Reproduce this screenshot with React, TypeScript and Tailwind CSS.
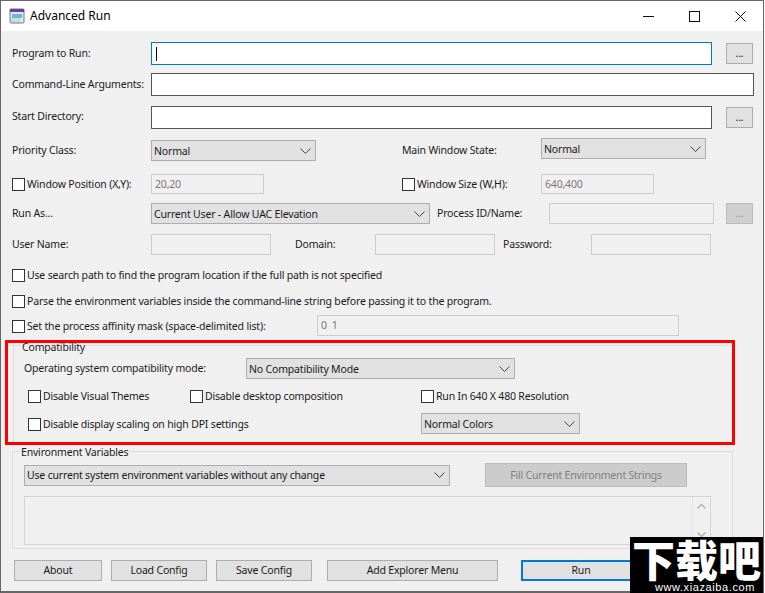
import React from "react";

function Chevron() {
  return (
    <svg width="11" height="6" viewBox="0 0 11 6" fill="none" stroke="#444" strokeWidth="1" className="shrink-0">
      <path d="M0.5 0.5 L5.5 5.5 L10.5 0.5" />
    </svg>
  );
}

function Select({ text, className }: { text: string; className: string }) {
  return (
    <div className={"flex h-[21px] shrink-0 items-center justify-between border border-[#adadad] bg-[#e1e1e1] pl-[2px] pr-[4px] " + className}>
      <span className="mt-px">{text}</span>
      <Chevron />
    </div>
  );
}

function Check({ text, className = "" }: { text: string; className?: string }) {
  return (
    <div className={"flex shrink-0 items-center gap-[2px] whitespace-nowrap " + className}>
      <span className="h-[13px] w-[13px] shrink-0 border border-[#333] bg-white" />
      <span>{text}</span>
    </div>
  );
}

function Box({ className }: { className: string }) {
  return <div className={"h-[23px] shrink-0 border border-[#555] bg-white " + className} />;
}

function Disabled({ text = "", className }: { text?: string; className: string }) {
  return (
    <div className={"flex shrink-0 items-center border border-[#ccc] bg-[#f0f0f0] pl-[3px] text-[#777] " + className}>
      {text}
    </div>
  );
}

function Btn({ text, className }: { text: string; className: string }) {
  return (
    <div className={"flex h-[21px] shrink-0 items-center justify-center border border-[#adadad] bg-[#e1e1e1] " + className}>
      {text}
    </div>
  );
}

export default function App() {
  return (
    <div className="h-[593px] w-[765px] overflow-hidden bg-[#f8f8f8]">
      <div className="relative h-[593px] w-[764px] border border-b-2 border-[#666] bg-[#f0f0f0] font-['Noto_Sans',sans-serif] text-[10.5px] leading-none tracking-[-0.18px] text-[#1a1a1a]">
        {/* Title bar */}
        <div className="flex h-[30px] items-center bg-white">
          <svg width="16" height="16" viewBox="0 0 16 16" className="ml-[8px] shrink-0">
            <rect x="1" y="1" width="14" height="14" rx="1" fill="#dfe8ee" stroke="#6a7a88" />
            <rect x="1" y="1" width="14" height="3" fill="#6a3fa0" />
            <rect x="3" y="6" width="10" height="4" fill="#6fb6d8" />
            <rect x="3" y="11" width="7" height="2" fill="#f4f4f4" stroke="#7aa" strokeWidth="0.5" />
          </svg>
          <span className="ml-[5px] text-[12px] tracking-normal text-black">Advanced Run</span>
          <div className="ml-auto flex items-center">
            <svg width="11" height="11" viewBox="0 0 11 11" className="mr-[35px]" stroke="#111" fill="none"><path d="M0 5.5H11" /></svg>
            <svg width="11" height="11" viewBox="0 0 11 11" className="mr-[35px]" stroke="#111" fill="none"><rect x="0.5" y="0.5" width="10" height="10" /></svg>
            <svg width="11" height="11" viewBox="0 0 11 11" className="mr-[17px]" stroke="#111" fill="none"><path d="M0.5 0.5L10.5 10.5M10.5 0.5L0.5 10.5" /></svg>
          </div>
        </div>

        <div className="pl-[11px]">
          <div className="mt-[11px] flex items-start">
            <span className="mt-[6px] w-[139px] shrink-0 whitespace-nowrap">Program to Run:</span>
            <div className="flex h-[23px] w-[561px] shrink-0 items-center border border-[#0078d7] bg-white pl-[4px]">
              <span className="h-[14px] w-px bg-black" />
            </div>
            <Btn text="..." className="ml-[14px] mt-px w-[27px]" />
          </div>
          <div className="mt-[8px] flex items-start">
            <span className="mt-[6px] w-[139px] shrink-0 whitespace-nowrap">Command-Line Arguments:</span>
            <Box className="w-[603px]" />
          </div>
          <div className="mt-[10px] flex items-start">
            <span className="mt-[5px] w-[139px] shrink-0 whitespace-nowrap">Start Directory:</span>
            <Box className="w-[561px]" />
            <Btn text="..." className="ml-[14px] mt-px w-[27px]" />
          </div>
          <div className="mt-[9px] flex h-[23px] items-start">
            <span className="mt-[7px] w-[139px] shrink-0 whitespace-nowrap">Priority Class:</span>
            <Select text="Normal" className="mt-[2px] w-[165px]" />
            <span className="ml-[86px] mt-[7px] w-[139px] shrink-0 whitespace-nowrap">Main Window State:</span>
            <Select text="Normal" className="w-[165px]" />
          </div>
          <div className="mt-[13px] flex h-[20px] items-center">
            <Check text="Window Position (X,Y):" className="w-[139px]" />
            <Disabled text="20,20" className="h-[20px] w-[113px]" />
            <Check text="Window Size (W,H):" className="ml-[138px] w-[139px]" />
            <Disabled text="640,400" className="h-[20px] w-[113px]" />
          </div>
          <div className="mt-[9px] flex h-[21px] items-center">
            <span className="w-[139px] shrink-0 whitespace-nowrap">Run As...</span>
            <Select text="Current User - Allow UAC Elevation" className="w-[279px]" />
            <span className="ml-[7px] w-[112px] shrink-0 whitespace-nowrap">Process ID/Name:</span>
            <Disabled className="h-[21px] w-[165px]" />
            <div className="ml-[12px] flex h-[21px] w-[27px] shrink-0 items-center justify-center border border-[#bbb] bg-[#cfcfcf] text-[#888]">...</div>
          </div>
          <div className="mt-[10px] flex h-[21px] items-center">
            <span className="w-[139px] shrink-0 whitespace-nowrap">User Name:</span>
            <Disabled className="h-[21px] w-[120px]" />
            <span className="ml-[24px] w-[80px] shrink-0 whitespace-nowrap">Domain:</span>
            <Disabled className="h-[21px] w-[120px]" />
            <span className="ml-[8px] w-[88px] shrink-0 whitespace-nowrap">Password:</span>
            <Disabled className="h-[21px] w-[120px]" />
          </div>
          <Check text="Use search path to find the program location if the full path is not specified" className="mt-[13px] h-[14px]" />
          <Check text="Parse the environment variables inside the command-line string before passing it to the program." className="mt-[12px] h-[14px]" />
          <div className="mt-[7px] flex h-[21px] items-center">
            <Check text="Set the process affinity mask (space-delimited list):" className="mt-[2px] w-[305px]" />
            <Disabled text="0 1" className="h-[21px] w-[362px] tracking-[1px]" />
          </div>
        </div>

        {/* Compatibility group */}
        <div className="relative ml-[12px] mt-[9px] h-[99px] w-[720px] border border-[#dcdcdc] pl-[10px]">
          <span className="absolute left-[7px] top-[-4px] bg-[#f0f0f0] px-px">Compatibility</span>
          <div className="mt-[12px] flex h-[21px] items-center">
            <span className="w-[222px] shrink-0 whitespace-nowrap">Operating system compatibility mode:</span>
            <Select text="No Compatibility Mode" className="w-[269px]" />
          </div>
          <div className="mt-[10px] flex h-[14px] items-center pl-[4px]">
            <Check text="Disable Visual Themes" className="w-[162px]" />
            <Check text="Disable desktop composition" className="w-[231px]" />
            <Check text="Run In 640 X 480 Resolution" />
          </div>
          <div className="mt-[10px] flex h-[21px] items-center pl-[4px]">
            <Check text="Disable display scaling on high DPI settings" className="mt-[2px] w-[393px]" />
            <Select text="Normal Colors" className="w-[159px]" />
          </div>
        </div>

        {/* Environment group */}
        <div className="relative ml-[11px] mt-[7px] h-[98px] w-[721px] border border-[#dcdcdc] pl-[11px]">
          <span className="absolute left-[7px] top-[-5px] bg-[#f0f0f0] px-px">Environment Variables</span>
          <div className="mt-[11px] flex h-[24px] items-center">
            <Select text="Use current system environment variables without any change" className="w-[426px]" />
            <div className="ml-[35px] flex h-[24px] w-[202px] shrink-0 items-center justify-center border border-[#bbb] bg-[#cccccc] text-[#808080]">Fill Current Environment Strings</div>
          </div>
          <div className="mt-[9px] flex h-[49px] w-[687px] justify-end border border-[#d4d4d4] bg-[#f0f0f0]">
            <div className="flex w-[18px] flex-col items-center justify-between border-l border-[#e4e4e4] py-[7px]">
              <svg width="9" height="5" viewBox="0 0 9 5" fill="none" stroke="#b5b5b5" strokeWidth="1.5"><path d="M0.5 4.5L4.5 0.5L8.5 4.5" /></svg>
              <svg width="9" height="5" viewBox="0 0 9 5" fill="none" stroke="#b5b5b5" strokeWidth="1.5"><path d="M0.5 0.5L4.5 4.5L8.5 0.5" /></svg>
            </div>
          </div>
        </div>

        {/* Bottom buttons */}
        <div className="ml-[13px] mt-[11px] flex items-center">
          <Btn text="About" className="w-[88px]" />
          <Btn text="Load Config" className="ml-[9px] w-[96px]" />
          <Btn text="Save Config" className="ml-[9px] w-[96px]" />
          <Btn text="Add Explorer Menu" className="ml-[15px] w-[171px]" />
          <div className="ml-[23px] flex h-[21px] w-[120px] shrink-0 items-center justify-center border-2 border-[#0078d7] bg-[#e1e1e1]">Run</div>
        </div>

        {/* Annotation */}
        <div className="pointer-events-none absolute left-[4px] top-[339px] h-[105px] w-[730px] border-[3px] border-[#ff0000]" />

        {/* Watermark */}
        <div className="absolute bottom-[-2px] left-[629px] flex h-[56px] w-[133px] flex-col items-center bg-black pt-px tracking-normal text-white">
          <span className="font-['Noto_Sans_CJK_SC',sans-serif] text-[43px] font-black leading-[40px]">下载吧</span>
          <span className="mr-[8px] mt-[4px] self-end font-['Liberation_Sans',sans-serif] text-[11px] leading-[11px] tracking-[0.6px]">www.xiazaiba.com</span>
        </div>
      </div>
    </div>
  );
}
